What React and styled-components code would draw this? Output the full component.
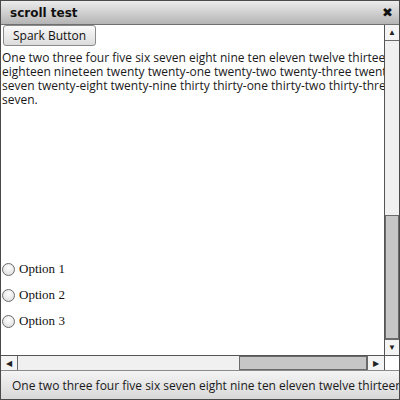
import React from "react";
import styled, { createGlobalStyle } from "styled-components";

const Global = createGlobalStyle`
  html, body { margin: 0; padding: 0; background: #fff; }
  * { box-sizing: border-box; }
`;

const Window = styled.div`
  width: 400px;
  height: 400px;
  display: flex;
  flex-direction: column;
  border: 1px solid #4a4a4a;
  background: #fff;
  overflow: hidden;
`;

const TitleBar = styled.div`
  height: 24px;
  flex: none;
  display: flex;
  align-items: center;
  justify-content: space-between;
  padding: 0 6px 0 9px;
  background: linear-gradient(#ececec, #b4b4b4);
  border-bottom: 1px solid #707070;
  font-family: "DejaVu Sans", sans-serif;
  font-weight: bold;
  font-size: 12px;
  color: #111;
`;

const Close = styled.span`
  font-size: 13px;
  line-height: 1;
`;

const Body = styled.div`
  flex: 1;
  min-height: 0;
  display: grid;
  grid-template-columns: 1fr 15px;
  grid-template-rows: 1fr 15px;
`;

const Viewport = styled.div`
  overflow: hidden;
  position: relative;
`;

const Content = styled.div`
  padding: 0 0 0 1px;
`;

const SparkButton = styled.button`
  display: block;
  margin: 0 0 5px 1px;
  height: 21px;
  padding: 0 9px;
  font-family: "Open Sans", sans-serif;
  font-size: 12px;
  color: #111;
  background: linear-gradient(#fafafa, #dcdcdc);
  border: 1px solid #8a8a8a;
  border-radius: 3px;
`;

const Paragraph = styled.p`
  margin: 0;
  width: 600px;
  font-family: "Open Sans", sans-serif;
  font-size: 12px;
  line-height: 14px;
  color: #1a1a1a;
`;

const Options = styled.div`
  margin-top: 153px;
  display: flex;
  flex-direction: column;
  gap: 8px;
`;

const OptionRow = styled.label`
  display: flex;
  align-items: center;
  gap: 4px;
  height: 18px;
  font-family: "Liberation Serif", serif;
  font-size: 13px;
  color: #111;
`;

const Radio = styled.span`
  width: 13px;
  height: 13px;
  border-radius: 50%;
  border: 1px solid #6a6a6a;
  background: radial-gradient(circle at 50% 35%, #ffffff, #d8d8d8);
`;

const VTrack = styled.div`
  display: flex;
  flex-direction: column;
  background: #f0f0f0;
  border-left: 1px solid #555;
`;

const HTrack = styled.div`
  display: flex;
  background: #f0f0f0;
  border-top: 1px solid #555;
`;

const Arrow = styled.div`
  flex: none;
  width: ${(p) => (p.$h ? "17px" : "100%")};
  height: ${(p) => (p.$h ? "100%" : "16px")};
  display: flex;
  align-items: center;
  justify-content: center;
  background: #f4f4f4;
  border-${(p) => p.$edge}: 1px solid #6a6a6a;
  font-size: 8px;
  color: #222;
`;

const Space = styled.div`
  flex: ${(p) => p.$grow};
`;

const Thumb = styled.div`
  flex: ${(p) => p.$grow};
  background: #c6c6c6;
  border: 1px solid #6a6a6a;
`;

const Corner = styled.div`
  background: #fff;
  border-top: 1px solid #555;
  border-left: 1px solid #555;
`;

const StatusBar = styled.div`
  height: 29px;
  flex: none;
  display: flex;
  align-items: center;
  padding-left: 11px;
  white-space: nowrap;
  overflow: hidden;
  background: linear-gradient(#f4f4f4, #d8d8d8);
  border-top: 1px solid #8a8a8a;
  font-family: "Open Sans", sans-serif;
  font-size: 12px;
  color: #1a1a1a;
`;

const text =
  "One two three four five six seven eight nine ten eleven twelve thirteen fourteen fifteen sixteen seventeen eighteen nineteen twenty twenty-one twenty-two twenty-three twenty-four twenty-five twenty-six twenty-seven twenty-eight twenty-nine thirty thirty-one thirty-two thirty-three thirty-four thirty-five thirty-six thirty-seven.";

export default function App() {
  return (
    <>
      <Global />
      <Window>
        <TitleBar>
          <span>scroll test</span>
          <Close>✖</Close>
        </TitleBar>
        <Body>
          <Viewport>
            <Content>
              <SparkButton>Spark Button</SparkButton>
              <Paragraph>{text}</Paragraph>
              <Options>
                {[1, 2, 3].map((n) => (
                  <OptionRow key={n}>
                    <Radio />
                    Option {n}
                  </OptionRow>
                ))}
              </Options>
            </Content>
          </Viewport>
          <VTrack>
            <Arrow $edge="bottom">▲</Arrow>
            <Space $grow={175} />
            <Thumb $grow={123} />
            <Arrow $edge="top">▼</Arrow>
          </VTrack>
          <HTrack>
            <Arrow $h $edge="right">◀</Arrow>
            <Space $grow={222} />
            <Thumb $grow={126} />
            <Arrow $h $edge="left">▶</Arrow>
          </HTrack>
          <Corner />
        </Body>
        <StatusBar>{text}</StatusBar>
      </Window>
    </>
  );
}
